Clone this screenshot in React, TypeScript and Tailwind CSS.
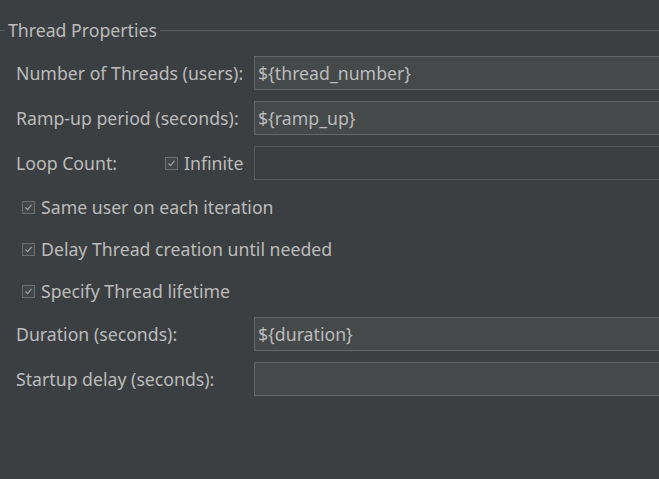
import React from "react";

const font = { fontFamily: '"Noto Sans", "Open Sans", sans-serif' };

function Check({ label }: { label: string }) {
  return (
    <div className="flex items-center gap-[6px]">
      <span className="flex h-[13px] w-[13px] items-center justify-center border border-[#6b6e70] bg-[#43474a]">
        <svg viewBox="0 0 13 13" className="h-[13px] w-[13px]">
          <path d="M3 6.5 L5.5 9 L10 3.5" fill="none" stroke="#a0a3a5" strokeWidth="1.4" />
        </svg>
      </span>
      <span>{label}</span>
    </div>
  );
}

function Field({ value, disabled }: { value?: string; disabled?: boolean }) {
  return (
    <div
      className={
        disabled
          ? "-mr-4 flex h-[34px] flex-1 items-center border border-[#56595b] bg-[#3c3f41] pl-[3px]"
          : "-mr-4 flex h-[34px] flex-1 items-center border border-[#646668] bg-[#45494a] pl-[3px]"
      }
    >
      {value}
    </div>
  );
}

function Row({ label, value }: { label: string; value?: string }) {
  return (
    <div className="flex items-center pl-4">
      <span className="w-[238px] whitespace-nowrap">{label}</span>
      <Field value={value} />
    </div>
  );
}

export default function App() {
  return (
    <div
      className="h-[479px] w-[659px] overflow-hidden bg-[#3c3f41] pt-5 text-[17.7px] leading-6 text-[#bbbbbb]"
      style={font}
    >
      <div className="flex h-5 items-center">
        <div className="h-px w-[5px] bg-[#5a5d5f]" />
        <span className="px-[3px] text-[#bbbbbb]">Thread Properties</span>
        <div className="h-px flex-1 bg-[#5a5d5f]" />
      </div>

      <div className="mt-4 flex flex-col gap-[11px]">
        <Row label="Number of Threads (users):" value="${thread_number}" />
        <Row label="Ramp-up period (seconds):" value="${ramp_up}" />
        <div className="flex items-center pl-4">
          <span className="w-[149px]">Loop Count:</span>
          <div className="w-[89px]">
            <Check label="Infinite" />
          </div>
          <Field disabled />
        </div>
      </div>

      <div className="mt-[6px] flex flex-col pl-[22px]">
        <div className="flex h-[42px] items-center">
          <Check label="Same user on each iteration" />
        </div>
        <div className="flex h-[42px] items-center">
          <Check label="Delay Thread creation until needed" />
        </div>
        <div className="flex h-[42px] items-center">
          <Check label="Specify Thread lifetime" />
        </div>
      </div>

      <div className="mt-[5px] flex flex-col gap-[11px]">
        <Row label="Duration (seconds):" value="${duration}" />
        <Row label="Startup delay (seconds):" />
      </div>
    </div>
  );
}
